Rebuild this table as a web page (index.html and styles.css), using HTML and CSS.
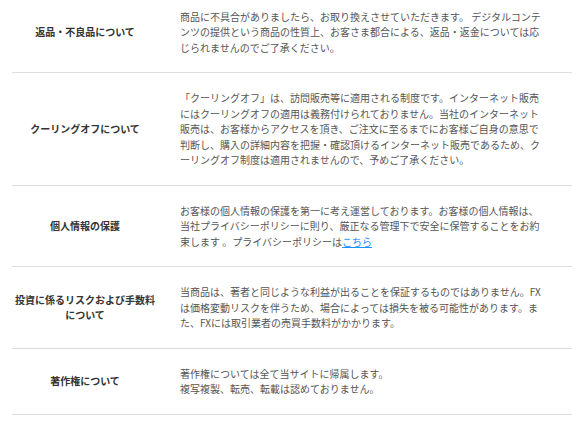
FILE: index.html
```html
<!DOCTYPE html>
<html lang="ja">
<head>
  <meta charset="UTF-8" />
  <meta name="viewport" content="width=device-width, initial-scale=1.0" />
  <title>特定商取引法に基づく表記</title>
  <link rel="stylesheet" href="styles.css">
</head>
<body>
  <div class="terms">
    <table class="terms-table">
      <tr>
        <th>返品・不良品について</th>
        <td>商品に不具合がありましたら、お取り換えさせていただきます。 デジタルコンテ<br>ンツの提供という商品の性質上、お客さま都合による、返品・返金については応<br>じられませんのでご了承ください。</td>
      </tr>
      <tr>
        <th>クーリングオフについて</th>
        <td>「クーリングオフ」は、訪問販売等に適用される制度です。インターネット販売<br>にはクーリングオフの適用は義務付けられておりません。当社のインターネット<br>販売は、お客様からアクセスを頂き、ご注文に至るまでにお客様ご自身の意思で<br>判断し、購入の詳細内容を把握・確認頂けるインターネット販売であるため、ク<br>ーリングオフ制度は適用されませんので、予めご了承ください。</td>
      </tr>
      <tr>
        <th>個人情報の保護</th>
        <td>お客様の個人情報の保護を第一に考え運営しております。お客様の個人情報は、<br>当社プライバシーポリシーに則り、厳正なる管理下で安全に保管することをお約<br>束します 。プライバシーポリシーは<a href="#">こちら</a></td>
      </tr>
      <tr>
        <th>投資に係るリスクおよび手数料について</th>
        <td>当商品は、著者と同じような利益が出ることを保証するものではありません。FX<br>は価格変動リスクを伴うため、場合によっては損失を被る可能性があります。ま<br>た、FXには取引業者の売買手数料がかかります。</td>
      </tr>
      <tr>
        <th>著作権について</th>
        <td>著作権については全て当サイトに帰属します。<br>複写複製、転売、転載は認めておりません。</td>
      </tr>
    </table>
  </div>
</body>
</html>
```

FILE: styles.css
```css
* {
  box-sizing: border-box;
  margin: 0;
  padding: 0;
}
body {
  background-color: #fff;
  font-family: "Noto Sans CJK JP", "Noto Sans", sans-serif;
  font-size: 10px;
  line-height: 15.5px;
  color: #555;
}
.terms {
  padding: 0 10px 0 12px;
}
.terms-table {
  width: 100%;
  border-collapse: collapse;
}
.terms-table tr {
  border-bottom: 1px solid #ddd;
}
.terms-table th {
  width: 146px;
  padding: 17px 0;
  text-align: center;
  vertical-align: middle;
  font-weight: bold;
  color: #333;
}
.terms-table td {
  padding: 17px 10px 17px 22px;
  white-space: nowrap;
}
.terms-table tr:first-child th,
.terms-table tr:first-child td {
  padding-top: 8.5px;
}
.terms-table a {
  color: #1e90ff;
  text-decoration: underline;
}
```
